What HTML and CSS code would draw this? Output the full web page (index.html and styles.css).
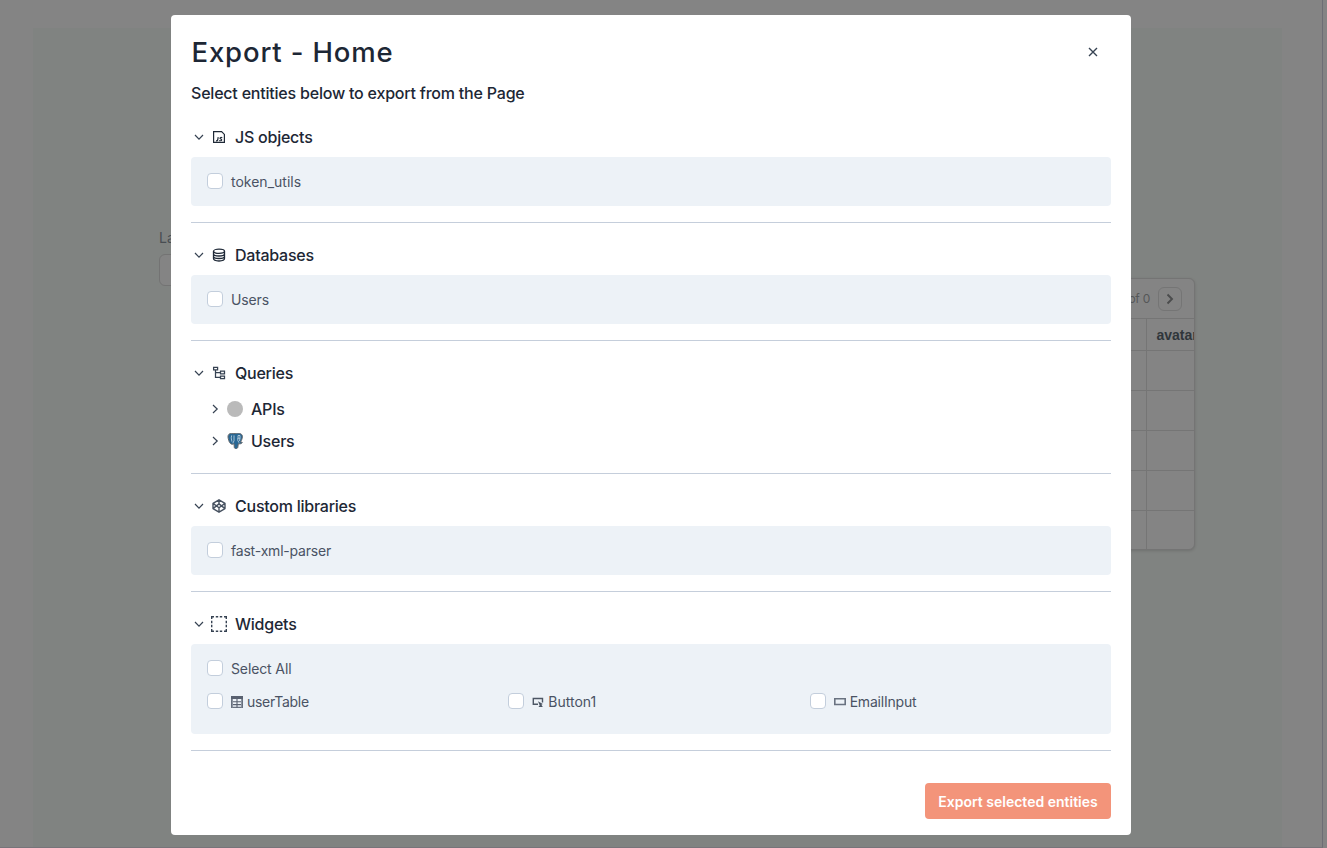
FILE: index.html
```html
<!DOCTYPE html>
<html lang="en">
<head>
<meta charset="utf-8">
<title>Export - Home</title>
<link rel="stylesheet" href="styles.css">
</head>
<body>
<svg class="defs" aria-hidden="true">
  <symbol id="chevron" viewBox="0 0 16 16"><path d="M4 6l4 4.200L12 6" fill="none" stroke="#364252" stroke-width="1.2"/></symbol>
  <symbol id="chevron-right" viewBox="0 0 16 16"><path d="M6 4l4.200 4L6 12" fill="none" stroke="#364252" stroke-width="1.2"/></symbol>
</svg>
<div class="editor">
  <div class="canvas">
    <div class="field">
      <label class="field-label">Label</label>
      <div class="field-input"></div>
    </div>
    <div class="table">
      <div class="table-bar"><span>of 0</span><span class="next"><svg width="14" height="14" viewBox="0 0 14 14"><path d="M4.500 2.500L9 7l-4.500 4.500" fill="none" stroke="#4b4c4d" stroke-width="1.9"/></svg></span></div>
      <div class="table-row table-head"><span class="cell"></span><span class="cell">avatar</span></div>
      <div class="table-row"><span class="cell"></span><span class="cell"></span></div>
      <div class="table-row"><span class="cell"></span><span class="cell"></span></div>
      <div class="table-row"><span class="cell"></span><span class="cell"></span></div>
      <div class="table-row"><span class="cell"></span><span class="cell"></span></div>
      <div class="table-row"><span class="cell"></span><span class="cell"></span></div>
    </div>
  </div>
</div>
<div class="overlay">
  <main class="modal">
    <header class="modal-head">
      <h1 class="title">Export - Home</h1>
      <svg class="close" width="16" height="16" viewBox="0 0 16 16"><path d="M4 4l8 8M12 4l-8 8" stroke="#364252" stroke-width="1.35"/></svg>
    </header>
    <p class="subtitle">Select entities below to export from the Page</p>

    <section class="section">
      <h2 class="heading"><svg class="icon"><use href="#chevron"/></svg>
        <svg class="icon kind" viewBox="0 0 16 16"><path d="M2.600 2.600h8l2.800 2.800v8H2.600z" fill="none" stroke="#1f2937" stroke-width="1.2"/><path d="M7.200 8.200L6.700 11Q6.400 12 5 11.800M11.300 8.700Q9.200 8 9 9.200C9 10.200 10.800 9.800 10.700 11Q10.500 12 8.200 11.600" fill="none" stroke="#1f2937" stroke-width="1.2"/></svg>
        <span>JS objects</span></h2>
      <div class="box"><label class="option"><i class="check"></i><span>token_utils</span></label></div>
    </section>

    <section class="section">
      <h2 class="heading"><svg class="icon"><use href="#chevron"/></svg>
        <svg class="icon kind" viewBox="0 0 16 16"><g fill="none" stroke="#1f2937" stroke-width="1.300"><ellipse cx="8" cy="4.300" rx="5.500" ry="2.100"/><path d="M2.500 4.300v7.300c0 1.300 2.200 2.400 5.500 2.400s5.500-1.100 5.500-2.400V4.300M2.500 6.800c0 1.300 2.200 2.200 5.500 2.200s5.500-.9 5.500-2.200M2.500 9.300c0 1.300 2.200 2.200 5.500 2.200s5.500-.9 5.500-2.200"/></g></svg>
        <span>Databases</span></h2>
      <div class="box"><label class="option"><i class="check"></i><span class="t-tight">Users</span></label></div>
    </section>

    <section class="section">
      <h2 class="heading"><svg class="icon"><use href="#chevron"/></svg>
        <svg class="icon kind" viewBox="0 0 16 16"><path d="M2.600 2.300h4v2.600h-4zM9.500 6.200h4v2.600h-4zM9.500 11h4v2.600h-4zM4.500 5v7.300h5M4.500 7.500h5" fill="none" stroke="#364252" stroke-width="1.250"/></svg>
        <span>Queries</span></h2>
      <div class="tree">
        <div class="heading"><svg class="icon"><use href="#chevron-right"/></svg><i class="dot"></i><span>APIs</span></div>
        <div class="heading"><svg class="icon"><use href="#chevron-right"/></svg>
          <svg class="icon pg" viewBox="0 0 16 16"><path d="M2 1.200C3.500-.1 5.500.6 7 .7 9.500-.1 14-.3 15.200 2.300c.6 2-.4 4.800-1.700 6.700l1.800.4c-.8 1.700-2.800 1.500-4 1.400l-.5 3.600c-.9 2-3.200 1.400-3.500 0L7 10.600c-2 1.800-4.400-.1-5.200-3C1 5 .4 2.700 2 1.200z" fill="#286794" stroke="#62666a" stroke-width="1"/><path d="M4.700 2.400c-1 3 0 4.200.2 6.200M7 2.400v5.400l-1.200 2.400M11 2.500H13v2.700h-2zM10.800 5v2.500l1.200 2.200M13 5l-.5 3" fill="none" stroke="#c9dbe6" stroke-width=".8"/></svg>
          <span>Users</span></div>
      </div>
    </section>

    <section class="section">
      <h2 class="heading"><svg class="icon"><use href="#chevron"/></svg>
        <svg class="icon kind" viewBox="0 0 16 16"><path d="M8 1.800l6 3.600v5.200l-6 3.600-6-3.600V5.400zM8 1.800v4M8 10.200v4M2 5.400l6 4.400 6-4.400M2 10.600l6-4.700 6 4.700" fill="none" stroke="#465160" stroke-width="1.400" stroke-linejoin="round"/></svg>
        <span>Custom libraries</span></h2>
      <div class="box"><label class="option"><i class="check"></i><span class="t-xml">fast-xml-parser</span></label></div>
    </section>

    <section class="section">
      <h2 class="heading"><svg class="icon"><use href="#chevron"/></svg>
        <svg class="icon kind" viewBox="0 0 16 16"><path d="M.7 3V.7H3M4.800.7h2.400M8.800.7h2.400M13 .7h2.300V3M15.300 4.800v2.400M15.300 8.800v2.400M15.300 13v2.300H13M11.200 15.300H8.800M7.200 15.300H4.800M3 15.300H.7V13M.7 11.200V8.800M.7 7.200V4.800" fill="none" stroke="#364252" stroke-width="1.400"/></svg>
        <span>Widgets</span></h2>
      <div class="box box-widgets">
        <label class="option"><i class="check"></i><span class="t-tight">Select All</span></label>
        <div class="widgets">
          <label class="option"><i class="check"></i><svg class="wicon" width="12" height="12" viewBox="0 0 12 12"><path d="M.6.6h10.800v10.800H.6z" fill="#edf2f7" stroke="#697280" stroke-width="1.200"/><path d="M0 0h12v3H0z" fill="#596170"/><path d="M.6 5.800h10.800M.6 8.600h10.800M6 3v8.500" stroke="#596170" stroke-width="1.100"/><path d="M1.500 3v8.500M10.500 3v8.500" stroke="#8a929e" stroke-width="1"/></svg><span class="t-table">userTable</span></label>
          <label class="option"><i class="check"></i><svg class="wicon" width="12" height="12" viewBox="0 0 12 12"><path d="M6 8.300H1.300V2.500h9.200v4" fill="none" stroke="#4c5664" stroke-width="1.400"/><path d="M6 5.200l4.800 2.800-1.400.7 1.400 2.300H6.400l1.300-1.600z" fill="#4c5664"/></svg><span>Button1</span></label>
          <label class="option"><i class="check"></i><svg class="wicon" width="12" height="12" viewBox="0 0 12 12"><path d="M.8 2.800h10.400v5.700H.8z" fill="none" stroke="#697280" stroke-width="1.600"/></svg><span class="t-email">EmailInput</span></label>
        </div>
      </div>
    </section>

    <footer class="foot"><button class="export">Export selected entities</button></footer>
  </main>
</div>
</body>
</html>
```
FILE: styles.css
```css
* { box-sizing: border-box; }
body { margin: 0; height: 848px; overflow: hidden; position: relative; background: #848484; font-family: Inter, "Liberation Sans", sans-serif; }
.defs { position: absolute; width: 0; height: 0; }
.editor { width: 1323px; height: 848px; padding: 28px 40px 0 33px; background: #848484; border-right: 1px solid #6d6e75; border-bottom: 1px solid #77747a; }
.canvas { position: relative; height: 819px; background: #808381; }
.field { position: absolute; left: 126px; top: 200px; width: 300px; }
.field-label { display: block; font-size: 14px; line-height: 20px; letter-spacing: .2px; color: #484d52; }
.field-input { height: 32px; margin-top: 6px; border: 1px solid #737373; border-radius: 6px; background: #848484; }
.table { position: absolute; left: 867px; top: 250px; width: 295px; height: 272px; border: 1px solid #747474; border-radius: 6px; background: #848484; box-shadow: 0 1px 3px rgba(0,0,0,.14); overflow: hidden; }
.table-bar { display: flex; align-items: center; justify-content: flex-end; gap: 8px; height: 40px; padding-right: 12px; border-bottom: 1px solid #757575; font-size: 12px; letter-spacing: -.25px; color: #555758; }
.next { display: grid; place-items: center; width: 24px; height: 24px; border: 1px solid #757575; border-radius: 6px; }
.table-row { display: grid; grid-template-columns: 246px 120px; height: 40px; border-bottom: 1px solid #757575; }
.table-row:last-child { border-bottom: 0; }
.table-head { height: 32px; font: bold 14px/33px "Liberation Sans", Arial, sans-serif; color: #30363b; }
.cell { border-right: 1px solid #757575; padding-left: 9.5px; }
.overlay { position: absolute; inset: 15px 196px 13px 171px; }
.modal { height: 820px; padding: 20px; background: #fff; border-radius: 4px; }
.modal-head { display: flex; justify-content: space-between; align-items: center; height: 34px; padding-right: 10px; }
.title { margin: 0; padding: 0 0 1px .5px; font-size: 27.5px; line-height: 34px; font-weight: 500; letter-spacing: .85px; color: #1d2735; }
.subtitle { margin: 12px 0 20px; font-size: 16px; line-height: 24px; font-weight: 500; letter-spacing: -.21px; color: #1d2735; }
.section { display: flow-root; margin-bottom: 20px; border-bottom: 1px solid #c5cedb; }
.heading { display: flex; align-items: center; height: 24px; margin: 0; font-size: 16px; line-height: 24px; font-weight: 500; letter-spacing: -.24px; color: #1d2735; }
.icon { width: 16px; height: 16px; flex: none; margin-right: 4px; }
.icon.kind, .icon.pg { margin-right: 8px; }
.dot { width: 16px; height: 16px; margin-right: 8px; border-radius: 50%; background: #bababa; }
.box { height: 49px; margin: 8px 0 16px; padding: 15px 16px 0; border-radius: 4px; background: #edf2f7; }
.box-widgets { height: 90px; }
.option { display: flex; align-items: center; height: 20px; font-size: 14px; line-height: 20px; color: #4a5364; }
.t-xml, .t-email { letter-spacing: -.2px; }
.t-table { letter-spacing: -.28px; }
.t-tight { letter-spacing: -.12px; }
.check { width: 16px; height: 16px; margin-right: 8px; border: 1px solid #c3cedc; border-radius: 4px; background: #fff; flex: none; position: relative; top: -1px; }
.wicon { margin-right: 4px; }
.widgets { display: grid; grid-template-columns: repeat(3, 1fr); column-gap: 16px; margin-top: 13px; }
.tree { display: grid; gap: 8px; padding: 12px 0 20px 16px; }
.foot { display: flex; justify-content: flex-end; margin-top: 32px; }
.export { width: 186px; height: 36px; padding: 2px 0 0; border: 0; border-radius: 4px; background: #f3947a; color: #fff; font: 600 14px/20px Inter, sans-serif; }
```
